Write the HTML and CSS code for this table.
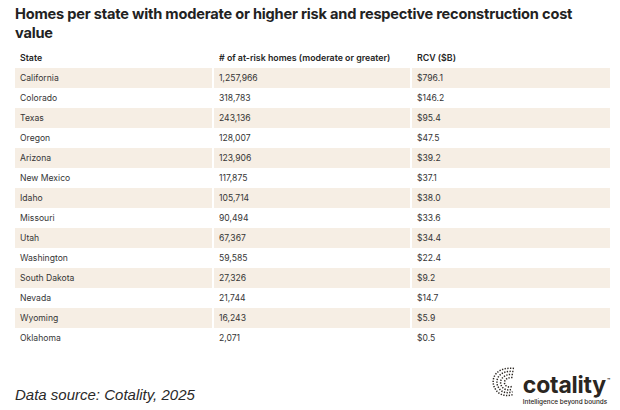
FILE: index.html
```html
<!DOCTYPE html>
<html>
<head>
<meta charset="utf-8">
<link rel="stylesheet" href="styles.css">
</head>
<body>
<div class="page">
  <h1 class="title">Homes per state with moderate or higher risk and respective reconstruction cost value</h1>
  <div class="table">
    <div class="row head"><div class="cell">State</div><div class="cell"># of at-risk homes (moderate or greater)</div><div class="cell">RCV ($B)</div></div>
    <div class="row band"><div class="cell">California</div><div class="cell">1,257,966</div><div class="cell">$796.1</div></div>
    <div class="row"><div class="cell">Colorado</div><div class="cell">318,783</div><div class="cell">$146.2</div></div>
    <div class="row band"><div class="cell">Texas</div><div class="cell">243,136</div><div class="cell">$95.4</div></div>
    <div class="row"><div class="cell">Oregon</div><div class="cell">128,007</div><div class="cell">$47.5</div></div>
    <div class="row band"><div class="cell">Arizona</div><div class="cell">123,906</div><div class="cell">$39.2</div></div>
    <div class="row"><div class="cell">New Mexico</div><div class="cell">117,875</div><div class="cell">$37.1</div></div>
    <div class="row band"><div class="cell">Idaho</div><div class="cell">105,714</div><div class="cell">$38.0</div></div>
    <div class="row"><div class="cell">Missouri</div><div class="cell">90,494</div><div class="cell">$33.6</div></div>
    <div class="row band"><div class="cell">Utah</div><div class="cell">67,367</div><div class="cell">$34.4</div></div>
    <div class="row"><div class="cell">Washington</div><div class="cell">59,585</div><div class="cell">$22.4</div></div>
    <div class="row band"><div class="cell">South Dakota</div><div class="cell">27,326</div><div class="cell">$9.2</div></div>
    <div class="row"><div class="cell">Nevada</div><div class="cell">21,744</div><div class="cell">$14.7</div></div>
    <div class="row band"><div class="cell">Wyoming</div><div class="cell">16,243</div><div class="cell">$5.9</div></div>
    <div class="row"><div class="cell">Oklahoma</div><div class="cell">2,071</div><div class="cell">$0.5</div></div>
  </div>
  <div class="footer">
    <div class="source">Data source: Cotality, 2025</div>
    <div class="logo">
      <svg class="mark" width="25" height="30" viewBox="0 0 25 30">
        <g fill="none" stroke="#2b2621" stroke-width="1.5" stroke-dasharray="1.3 1.4">
          <path d="M23 1.5 C15 0.5 7 2.5 3.5 9 C0.5 15 2.5 23 9.5 27 C13.5 29 18 29 22 27.5"/>
          <path d="M22.5 4.5 C16 3.8 10 5.5 7 10.5 C4.5 15.5 6.5 21.5 11.5 24.5 C14.5 26 18 26 21.5 24.8"/>
          <path d="M22 7.5 C17 7 13 8.5 10.5 12 C8.5 15.5 10 20 13.5 22 C16 23.2 18.5 23.2 21 22.2"/>
          <path d="M21.5 10.5 C18 10.3 15.5 11.3 14 13.5 C12.8 15.8 13.8 18.5 16 19.5 C17.5 20.2 19.3 20.1 21 19.5"/>
        </g>
      </svg>
      <div class="wordmark">
        <div class="name">cotality<span class="tm">™</span></div>
        <div class="tagline">Intelligence beyond bounds</div>
      </div>
    </div>
  </div>
</div>
</body>
</html>
```
FILE: styles.css
```css
html, body {
  margin: 0;
  padding: 0;
  background: #ffffff;
}
.page {
  width: 620px;
  height: 410px;
  box-sizing: border-box;
  padding: 5px 10px 0 15px;
  font-family: Inter, "Liberation Sans", sans-serif;
  color: #2b2b2b;
}
.title {
  margin: 0;
  font-size: 14.6px;
  line-height: 19px;
  font-weight: 700;
  color: #222;
  letter-spacing: -0.2px;
  width: 595px;
}
.table {
  margin-top: 5px;
  width: 595px;
  display: flex;
  flex-direction: column;
}
.row {
  display: grid;
  grid-template-columns: 197px 196px 198px;
  column-gap: 2px;
  height: 20px;
}
.row.band .cell {
  background: #f6eee4;
}
.cell {
  padding-left: 5px;
  font-size: 8.6px;
  line-height: 20px;
  color: #353535;
  white-space: nowrap;
}
.row.head .cell {
  font-weight: 600;
  font-size: 8.8px;
  color: #252525;
}
.footer {
  display: flex;
  justify-content: space-between;
  align-items: flex-start;
  margin-top: 20px;
}
.source {
  margin-top: 18px;
  font-family: "Liberation Sans", Arial, sans-serif;
  font-style: italic;
  font-size: 15px;
  color: #2a2a2a;
}
.logo {
  display: flex;
  align-items: flex-start;
  gap: 7px;
}
.mark {
  display: block;
  margin-top: -1px;
}
.wordmark {
  display: flex;
  flex-direction: column;
}
.name {
  font-size: 23px;
  font-weight: 700;
  line-height: 25px;
  color: #2b2621;
  letter-spacing: -0.2px;
}
.tm {
  font-size: 5px;
  vertical-align: 11px;
  margin-left: 1px;
}
.tagline {
  font-size: 6.4px;
  font-weight: 500;
  color: #2b2621;
  line-height: 8px;
  margin-top: 0;
}
```
